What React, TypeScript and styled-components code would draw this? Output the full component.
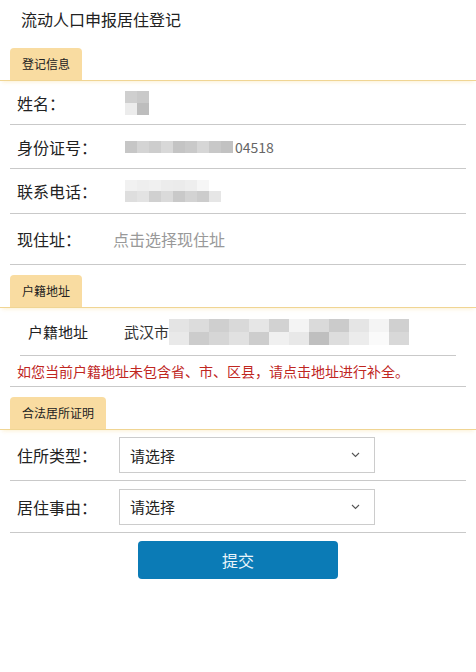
import React from "react";
import styled, { createGlobalStyle } from "styled-components";

const Global = createGlobalStyle`
  html, body { margin: 0; padding: 0; background: #fff; }
  body { font-family: "Noto Sans CJK SC", "Noto Sans", sans-serif; color: #222; }
  * { box-sizing: border-box; }
`;

const Page = styled.div`
  width: 476px;
  min-height: 672px;
  background: #fff;
  display: flex;
  flex-direction: column;
`;

const Title = styled.div`
  height: 48px;
  padding: 8px 0 0 21px;
  font-size: 16px;
  line-height: 22px;
  color: #222;
`;

const TabBar = styled.div<{ $gap?: number }>`
  margin-top: ${(p) => p.$gap ?? 0}px;
  padding-left: 10px;
  border-bottom: 1px solid #f0d593;
  box-shadow: 0 3px 4px -2px rgba(250, 230, 180, 0.6);
  display: flex;
`;

const Tab = styled.div`
  height: 32px;
  padding: 0 12px;
  background: #f9dca1;
  border-radius: 4px 4px 0 0;
  font-size: 12px;
  line-height: 32px;
  color: #222;
`;

const Row = styled.div<{ $h: number; $inset?: number }>`
  height: ${(p) => p.$h}px;
  margin: 0 ${(p) => p.$inset ?? 10}px;
  border-bottom: 1px solid #c9c9c9;
  display: flex;
  align-items: center;
`;

const Label = styled.div<{ $w: number; $pad?: number; $size?: number }>`
  width: ${(p) => p.$w}px;
  padding-left: ${(p) => p.$pad ?? 7}px;
  font-size: ${(p) => p.$size ?? 16}px;
  color: #222;
  flex-shrink: 0;
`;

const Value = styled.div`
  display: flex;
  align-items: center;
  font-size: 15px;
  color: #333;
`;

const Placeholder = styled.div`
  font-size: 16px;
  color: #999;
`;

const Mosaic = styled.div<{ $cols: number; $cw: number; $rh: number }>`
  display: inline-grid;
  grid-template-columns: repeat(${(p) => p.$cols}, ${(p) => p.$cw}px);
  grid-auto-rows: ${(p) => p.$rh}px;
  filter: blur(0.6px);
`;

const Cell = styled.div<{ $c: string }>`
  background: ${(p) => p.$c};
`;

const Tail = styled.span`
  font-size: 14px;
  color: #666;
  margin-left: 2px;
`;

const Note = styled.div`
  height: 31px;
  margin: 0 10px;
  padding-left: 7px;
  border-bottom: 1px solid #c9c9c9;
  display: flex;
  align-items: center;
  font-size: 14px;
  color: #c0271f;
  white-space: nowrap;
`;

const Select = styled.div`
  width: 256px;
  height: 36px;
  border: 1px solid #cccccc;
  background: #fff;
  display: flex;
  align-items: center;
  justify-content: space-between;
  padding: 0 14px 0 10px;
  font-size: 15px;
  color: #222;
`;

const Chevron = styled.svg`
  width: 9px;
  height: 6px;
`;

const ButtonWrap = styled.div`
  display: flex;
  justify-content: center;
  padding-top: 8px;
`;

const Button = styled.button`
  width: 200px;
  height: 38px;
  border: none;
  border-radius: 4px;
  background: #0b7bb6;
  color: #eaf5fb;
  font-family: "Noto Sans CJK SC", "Noto Sans", sans-serif;
  font-size: 16px;
  cursor: pointer;
`;

function Blocks({ cols, cw, rh, colors }: { cols: number; cw: number; rh: number; colors: string[] }) {
  return (
    <Mosaic $cols={cols} $cw={cw} $rh={rh}>
      {colors.map((c, i) => (
        <Cell key={i} $c={c} />
      ))}
    </Mosaic>
  );
}

function Down() {
  return (
    <Chevron viewBox="0 0 9 6">
      <path d="M1 1 L4.5 4.5 L8 1" fill="none" stroke="#555" strokeWidth="1.1" />
    </Chevron>
  );
}

export default function App() {
  return (
    <Page>
      <Global />
      <Title>流动人口申报居住登记</Title>

      <TabBar>
        <Tab>登记信息</Tab>
      </TabBar>
      <Row $h={44}>
        <Label $w={115}>姓名：</Label>
        <Value>
          <Blocks cols={2} cw={12} rh={12} colors={["#cfcfcf", "#c9c9c9", "#ececec", "#bdbdbd"]} />
        </Value>
      </Row>
      <Row $h={44}>
        <Label $w={115}>身份证号：</Label>
        <Value>
          <Blocks
            cols={9}
            cw={12}
            rh={12}
            colors={["#c6c6c6", "#d4d4d4", "#cdcdcd", "#d8d8d8", "#c4c4c4", "#c9c9c9", "#d6d6d6", "#c8c8c8", "#c2c2c2"]}
          />
          <Tail>04518</Tail>
        </Value>
      </Row>
      <Row $h={45}>
        <Label $w={115}>联系电话：</Label>
        <Value>
          <Blocks
            cols={8}
            cw={12}
            rh={11}
            colors={[
              "#f1f1f1", "#eeeeee", "#f0f0f0", "#ececec", "#ebebeb", "#eeeeee", "#f6f6f6", "#ffffff",
              "#dedede", "#e3e3e3", "#d0d0d0", "#dadada", "#c9c9c9", "#d3d3d3", "#cccccc", "#e6e6e6",
            ]}
          />
        </Value>
      </Row>
      <Row $h={51}>
        <Label $w={103}>现住址：</Label>
        <Placeholder>点击选择现住址</Placeholder>
      </Row>

      <TabBar $gap={10}>
        <Tab>户籍地址</Tab>
      </TabBar>
      <Row $h={48} $inset={20}>
        <Label $w={104} $pad={8} $size={15}>户籍地址</Label>
        <Value>
          武汉市
          <Blocks
            cols={12}
            cw={20}
            rh={13}
            colors={[
              "#e4e4e4", "#dcdcdc", "#cfcfcf", "#d9d9d9", "#e6e6e6", "#d2d2d2", "#f4f4f4", "#dadada", "#cbcbcb", "#e5e5e5", "#f4f4f4", "#d0d0d0",
              "#e9e9e9", "#cccccc", "#d6d6d6", "#e1e1e1", "#cdcdcd", "#f0f0f0", "#e8e8e8", "#bfbfbf", "#dddddd", "#ececec", "#fafafa", "#d8d8d8",
            ]}
          />
        </Value>
      </Row>
      <Note>如您当前户籍地址未包含省、市、区县，请点击地址进行补全。</Note>

      <TabBar $gap={10}>
        <Tab>合法居所证明</Tab>
      </TabBar>
      <Row $h={51}>
        <Label $w={109}>住所类型：</Label>
        <Select>
          请选择
          <Down />
        </Select>
      </Row>
      <Row $h={52}>
        <Label $w={109}>居住事由：</Label>
        <Select>
          请选择
          <Down />
        </Select>
      </Row>
      <ButtonWrap>
        <Button>提交</Button>
      </ButtonWrap>
    </Page>
  );
}
